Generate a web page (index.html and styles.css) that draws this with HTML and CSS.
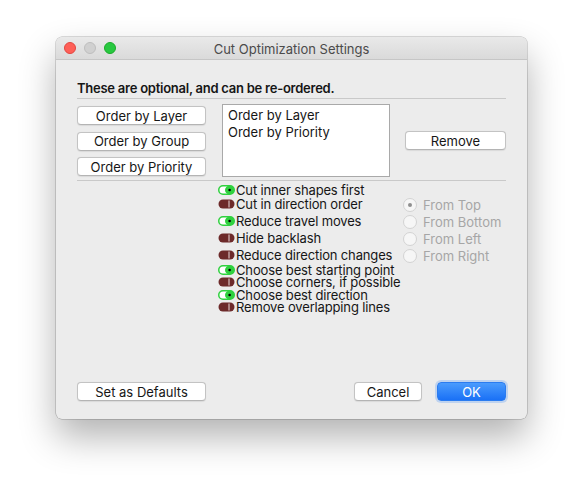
FILE: index.html
```html
<!DOCTYPE html>
<html lang="en">
<head>
  <meta charset="UTF-8" />
  <title>Cut Optimization Settings</title>
  <link rel="stylesheet" href="styles.css">
</head>
<body>
  <svg class="defs" width="0" height="0">
    <symbol id="on" viewBox="0 0 17 10">
      <rect x="0.75" y="0.75" width="15.5" height="8.5" rx="4.25" fill="#fff" stroke="#2fd13e" stroke-width="1.5" />
      <rect x="7" y="0.75" width="9.25" height="8.5" rx="4.25" fill="#2fd13e" />
      <circle cx="11.6" cy="5" r="1.3" fill="#000" />
    </symbol>
    <symbol id="off" viewBox="0 0 17 10">
      <rect x="0.5" y="0.5" width="16" height="9" rx="4.5" fill="#6d2a2a" />
      <path d="M11 1.5 v7" stroke="#ead9d9" stroke-width="1" />
    </symbol>
  </svg>

  <div class="window">
    <div class="titlebar">
      <div class="lights">
        <span class="light red"></span>
        <span class="light grey"></span>
        <span class="light green"></span>
      </div>
      <div class="title">Cut Optimization Settings</div>
    </div>

    <div class="content">
      <div class="heading">These are optional, and can be re-ordered.</div>

      <div class="order">
        <div class="choices">
          <button class="btn">Order by Layer</button>
          <button class="btn">Order by Group</button>
          <button class="btn">Order by Priority</button>
        </div>
        <ul class="list">
          <li>Order by Layer</li>
          <li>Order by Priority</li>
        </ul>
        <button class="btn remove">Remove</button>
      </div>

      <div class="options">
        <div class="checks">
          <div class="opt"><svg class="tog"><use href="#on" /></svg>Cut inner shapes first</div>
          <div class="opt"><svg class="tog"><use href="#off" /></svg>Cut in direction order</div>
          <div class="opt gap"><svg class="tog"><use href="#on" /></svg>Reduce travel moves</div>
          <div class="opt gap"><svg class="tog"><use href="#off" /></svg>Hide backlash</div>
          <div class="opt gap"><svg class="tog"><use href="#off" /></svg>Reduce direction changes</div>
          <div class="opt small first"><svg class="tog"><use href="#on" /></svg>Choose best starting point</div>
          <div class="opt small"><svg class="tog"><use href="#off" /></svg>Choose corners, if possible</div>
          <div class="opt small"><svg class="tog"><use href="#on" /></svg>Choose best direction</div>
          <div class="opt small"><svg class="tog"><use href="#off" /></svg>Remove overlapping lines</div>
        </div>
        <div class="radios">
          <div class="radio checked"><span class="dot"></span>From Top</div>
          <div class="radio"><span class="dot"></span>From Bottom</div>
          <div class="radio"><span class="dot"></span>From Left</div>
          <div class="radio"><span class="dot"></span>From Right</div>
        </div>
      </div>

      <div class="footer">
        <button class="btn defaults">Set as Defaults</button>
        <div class="actions">
          <button class="btn cancel">Cancel</button>
          <button class="btn ok">OK</button>
        </div>
      </div>
    </div>
  </div>
</body>
</html>
```

FILE: styles.css
```css
html, body {
  margin: 0;
  background-color: #fff;
  height: 100%;
  overflow: hidden;
}

body {
  font-family: Inter, "Liberation Sans", sans-serif;
  font-size: 13px;
  color: #161616;
  padding: 37px 0 0 56px;
  box-sizing: border-box;
}

.defs {
  position: absolute;
}

.window {
  width: 471px;
  height: 382px;
  background-color: #ececec;
  border-radius: 6px;
  box-shadow: 0 0 0 0.5px rgba(0, 0, 0, 0.28), 0 18px 36px rgba(0, 0, 0, 0.3);
  display: flex;
  flex-direction: column;
  overflow: hidden;
}

.titlebar {
  height: 22px;
  background: linear-gradient(#e9e9e9, #dadada);
  border-bottom: 1px solid #c6c6c6;
  display: flex;
  align-items: center;
  position: relative;
}

.lights {
  display: flex;
  gap: 8px;
  padding-left: 8px;
}

.light {
  width: 12px;
  height: 12px;
  border-radius: 50%;
  box-sizing: border-box;
}

.light.red { background-color: #fe5f57; border: 0.5px solid #e14640; }
.light.grey { background-color: #d0d0d0; border: 0.5px solid #bdbdbd; }
.light.green { background-color: #28c840; border: 0.5px solid #1aab29; }

.title {
  position: absolute;
  left: 0;
  right: 0;
  text-align: center;
  color: #4b4b4b;
  font-size: 13px;
  padding-top: 1px;
}

.content {
  flex: 1;
  display: flex;
  flex-direction: column;
  padding: 20px 21px 18px;
}

.heading {
  font-weight: 600;
  letter-spacing: -0.25px;
  line-height: 16px;
  padding-bottom: 2px;
  border-bottom: 1px solid #c9c9c9;
}

.btn {
  font-family: inherit;
  font-size: 13px;
  color: #161616;
  background-color: #fff;
  border: 1px solid #c3c3c3;
  border-bottom-color: #b4b4b4;
  border-radius: 4px;
  height: 19px;
  padding: 0;
  box-shadow: 0 0.5px 1px rgba(0, 0, 0, 0.08);
}

.order {
  display: flex;
  align-items: flex-start;
  margin-top: 5px;
  padding-bottom: 3px;
  border-bottom: 1px solid #c9c9c9;
}

.choices {
  display: flex;
  flex-direction: column;
  gap: 6.5px;
  padding-top: 2px;
  width: 129px;
}

.choices .btn {
  width: 129px;
}

.list {
  list-style: none;
  margin: 0 0 0 16px;
  padding: 2px 5px;
  width: 168px;
  height: 73px;
  box-sizing: border-box;
  background-color: #fff;
  border: 1px solid #a9a9a9;
  line-height: 17px;
}

.remove {
  width: 101px;
  margin: 27px 0 0 15px;
}

.options {
  display: flex;
  padding-left: 141px;
}

.checks {
  width: 185px;
  padding-top: 2px;
  letter-spacing: -0.15px;
}

.opt {
  display: flex;
  align-items: center;
  line-height: 14px;
  white-space: nowrap;
}

.opt.gap { margin-top: 3px; }
.opt.small { line-height: 12.5px; }
.opt.first { margin-top: 1.5px; }

.tog {
  width: 17px;
  height: 10px;
  margin-right: 1px;
  flex: none;
}

.radios {
  padding-top: 15.5px;
}

.radio {
  display: flex;
  align-items: center;
  height: 17px;
  color: #a6a6a6;
}

.radio .dot {
  width: 14px;
  height: 14px;
  box-sizing: border-box;
  border: 1px solid #d3d3d3;
  border-radius: 50%;
  background-color: #f6f6f6;
  margin-right: 6px;
  position: relative;
}

.radio.checked .dot::after {
  content: "";
  position: absolute;
  left: 4px;
  top: 4px;
  width: 4px;
  height: 4px;
  border-radius: 50%;
  background-color: #8f8f8f;
}

.footer {
  margin-top: auto;
  display: flex;
  justify-content: space-between;
}

.defaults { width: 129px; }

.actions {
  display: flex;
  gap: 15px;
}

.cancel { width: 68px; }

.ok {
  width: 69px;
  color: #fff;
  background: linear-gradient(#4a9bfd, #1a71f6);
  border: 1px solid #2b7cf0;
  box-shadow: 0 0 0 2px rgba(110, 165, 245, 0.35);
}
```
